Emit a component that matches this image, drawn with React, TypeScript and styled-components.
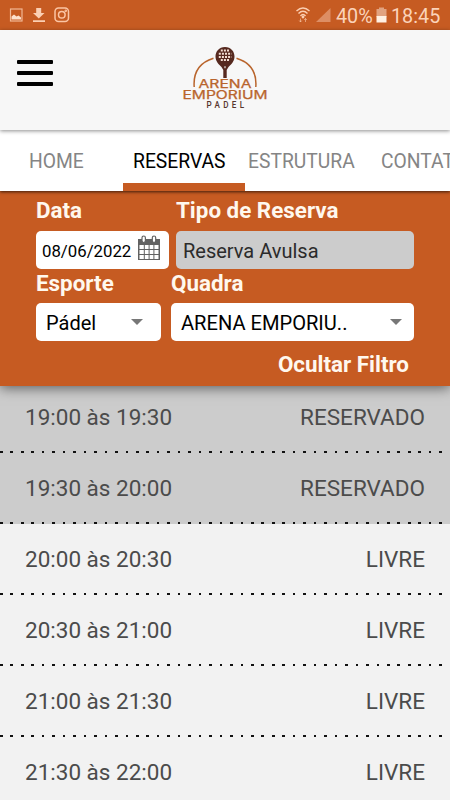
import React from "react";
import styled, { createGlobalStyle } from "styled-components";

const Global = createGlobalStyle`
  * { box-sizing: border-box; }
  body { margin: 0; background: #f2f2f2; font-family: Roboto, sans-serif; overflow: hidden; }
`;

const Screen = styled.div`
  width: 450px;
  height: 800px;
  overflow: hidden;
  display: flex;
  flex-direction: column;
  background: #f2f2f2;
`;

const StatusBar = styled.div`
  flex: none;
  height: 30px;
  padding: 0 10px 0 9px;
  display: flex;
  align-items: center;
  justify-content: space-between;
  background: #c65b22;
  color: #fbd3ba;
`;

const StatusGroup = styled.div`
  display: flex;
  align-items: center;
  height: 30px;
`;

const StatusText = styled.span<{ $w: number }>`
  width: ${(p) => p.$w}px;
  font-size: 19.8px;
  line-height: 33px;
  height: 30px;
  white-space: nowrap;
`;

const Header = styled.header`
  flex: none;
  height: 100px;
  display: flex;
  background: #f7f7f7;
  position: relative;
  box-shadow: 0 1px 4px rgba(0, 0, 0, 0.45);
  z-index: 3;
`;

const MenuButton = styled.button`
  width: 36px;
  height: 26px;
  margin: 30px 0 0 17px;
  padding: 0;
  border: 0;
  background: none;
  display: flex;
  flex-direction: column;
  justify-content: space-between;
`;

const MenuLine = styled.span`
  height: 3.6px;
  border-radius: 1px;
  background: #000;
`;

const Logo = styled.svg`
  display: block;
  margin: 6px 0 0 117px;
`;

const Tabs = styled.nav`
  flex: none;
  height: 61px;
  display: flex;
  background: #fff;
  position: relative;
  z-index: 2;
  box-shadow: 0 1px 3px rgba(0, 0, 0, 0.7);
`;

const Tab = styled.a<{ $active?: boolean; $w: number; $pad: number }>`
  flex: none;
  width: ${(p) => p.$w}px;
  padding-left: ${(p) => p.$pad}px;
  font-size: 19.3px;
  line-height: 64px;
  height: 61px;
  white-space: nowrap;
  color: ${(p) => (p.$active ? "#000" : "#858585")};
  box-shadow: ${(p) => (p.$active ? "inset 0 -8px #c65b22" : "none")};
`;

const FilterPanel = styled.section`
  flex: none;
  height: 195px;
  padding: 4px 36px 0;
  background: #c65b22;
  position: relative;
  z-index: 1;
  box-shadow: 0 2px 12px rgba(0, 0, 0, 0.55);
`;

const FilterRow = styled.div<{ $cols: string; $gap: number; $h: number }>`
  display: grid;
  grid-template-columns: ${(p) => p.$cols};
  column-gap: ${(p) => p.$gap}px;
  height: ${(p) => p.$h}px;
`;

const Label = styled.div<{ $h: number; $ls?: number }>`
  height: ${(p) => p.$h}px;
  line-height: 30px;
  font-size: 22.4px;
  letter-spacing: ${(p) => p.$ls ?? 0}px;
  font-weight: 700;
  color: #fff8ee;
`;

const Field = styled.div<{ $muted?: boolean; $pad: number; $right: number; $size: number }>`
  height: 38px;
  padding: 2px ${(p) => p.$right}px 0 ${(p) => p.$pad}px;
  display: flex;
  align-items: center;
  justify-content: space-between;
  border-radius: 5px;
  background: ${(p) => (p.$muted ? "#ccc" : "#fff")};
  color: ${(p) => (p.$muted ? "#2b2b2b" : "#000")};
  font-size: ${(p) => p.$size}px;
  white-space: nowrap;
`;

const Caret = styled.span`
  margin-bottom: 2px;
  border: 6px solid transparent;
  border-top-color: #777;
  border-bottom: 0;
`;

const HideFilter = styled.div`
  padding-right: 5px;
  text-align: right;
  font-size: 22.4px;
  line-height: 26px;
  font-weight: 700;
  color: #fff8ee;
`;

const List = styled.div`
  margin-top: -4px;
`;

const Slot = styled.div<{ $taken: boolean }>`
  height: 71px;
  padding: 0 25px 0 25px;
  display: flex;
  justify-content: space-between;
  font-size: 22.5px;
  line-height: 70px;
  color: #4b4b4b;
  background:
    repeating-linear-gradient(90deg, #111 0 2.6px, transparent 2.6px 10.46px) 0 100% / 100% 2px no-repeat,
    ${(p) => (p.$taken ? "#ccc" : "#f2f2f2")};
`;

const ImageIcon = () => (
  <svg width="14" height="14" viewBox="0 0 14 14" fill="none">
    <rect x="1.5" y="1" width="11.5" height="12" stroke="#f2b794" strokeWidth="1.2" />
    <path d="M2.5 11.5V8.5L5 6.5L7.5 8.5L9.5 7.5L12 9.5V11.5Z" fill="#fde0cc" />
  </svg>
);

const DownloadIcon = () => (
  <svg width="14" height="15" viewBox="0 0 14 15" fill="#fbcfb3">
    <path d="M4.2 0H9.2V5H12.5L6.8 10.5L1 5H4.2ZM1 12.3H13V14H1Z" />
  </svg>
);

const CameraIcon = () => (
  <svg width="16" height="16" viewBox="0 0 16 16" fill="none" stroke="#fbc5a4" strokeWidth="1.5">
    <rect x="1" y="1" width="13.5" height="13.5" rx="3.5" />
    <circle cx="7.8" cy="7.8" r="3.3" />
    <circle cx="11.8" cy="3.8" r=".5" />
  </svg>
);

const WifiSvg = styled.svg`
  margin-right: 1px;
`;

const WifiIcon = () => (
  <WifiSvg width="16" height="18" viewBox="0 0 16 18" fill="none" stroke="#fbcfb3" strokeWidth="1.4">
    <path d="M1.500 5Q8-1 14.500 5M3.500 7.5Q8 3 12.500 7.5M5.500 10Q8 7 10.500 10" />
    <circle cx="8" cy="11" r=".7" fill="#fbcfb3" />
    <path d="M5.5 12.500V16M4.200 14.500L5.5 16L6.800 14.500M10.5 16V12.5M9.200 14L10.5 12.5L11.800 14" strokeWidth="1" opacity=".6" />
  </WifiSvg>
);

const SignalIcon = () => (
  <svg width="16" height="16" viewBox="0 0 16 16">
    <path d="M0 15L14.5 1V15Z" fill="#dd8e64" />
  </svg>
);

const BatteryIcon = () => (
  <svg width="11" height="17" viewBox="0 0 11 17">
    <path d="M3 .5H8V2H10.5V10H.5V2H3Z" fill="#e1a27f" />
    <path d="M.5 9H10.5V15.5H.5Z" fill="#fff0e2" />
  </svg>
);

const CalendarSvg = styled.svg`
  margin: 0 2px 6px 0;
`;

const CalendarIcon = () => (
  <CalendarSvg width="24" height="26" viewBox="0 0 24 26">
    <path d="M1 4H23V25H1Z" fill="#626262" />
    <path
      d="M2.5 10H6.8V14H2.5ZM7.8 10H11.6V14H7.8ZM12.6 10H16.4V14H12.6ZM17.4 10H21.5V14H17.4ZM2.5 15H6.8V19H2.5ZM7.8 15H11.6V19H7.8ZM12.6 15H16.4V19H12.6ZM17.4 15H21.5V19H17.4ZM2.5 20H6.8V24H2.5ZM7.8 20H11.6V24H7.8ZM12.6 20H16.4V24H12.6ZM17.4 20H21.5V24H17.4Z"
      fill="#fff"
    />
    <rect x="5" y="1" width="3.4" height="6.5" rx="1.7" fill="#fff" stroke="#626262" strokeWidth="1.2" />
    <rect x="15.3" y="1" width="3.4" height="6.5" rx="1.7" fill="#fff" stroke="#626262" strokeWidth="1.2" />
  </CalendarSvg>
);

const ArenaLogo = () => (
  <Logo width="110" height="80" viewBox="0 0 110 80">
    <path d="M24.2 51C23 35 31 26 43.5 22.2M66.5 22.2C79 26 87 35 85.8 51" fill="none" stroke="#b9652d" strokeWidth="1.5" />
    <path d="M55 11C61 11 64.5 15.5 64.5 20.5C64.5 25.5 61 28.5 58.5 31L56.7 34V42H53.3V34L51.5 31C49 28.5 45.5 25.5 45.5 20.5C45.5 15.5 49 11 55 11Z" fill="#56291f" />
    <g stroke="#f3ded3" strokeWidth="2" strokeDasharray="2 1.1">
      <path d="M50.8 14.5H59.4M48.8 17.7H61.5M48.8 20.9H61.5M50.8 24.1H59.4" />
    </g>
    <path d="M54 30.5H56L55 32.8Z" fill="#f7f7f7" />
    <g fontFamily="Inter, sans-serif" fill="#b9652d" stroke="#b9652d" strokeWidth=".25">
      <text x="28.5" y="52.2" fontSize="11.6" textLength="53" lengthAdjust="spacingAndGlyphs">ARENA</text>
      <text x="12.5" y="62.6" fontSize="11.6" textLength="85" lengthAdjust="spacingAndGlyphs">EMPORIUM</text>
    </g>
    <text x="36.5" y="72" fontFamily="Roboto, sans-serif" fontSize="9.6" fontWeight="500" fill="#56352c" letterSpacing="4" textLength="41" lengthAdjust="spacingAndGlyphs">PADEL</text>
  </Logo>
);

const slots = [
  { time: "19:00 às 19:30", taken: true },
  { time: "19:30 às 20:00", taken: true },
  { time: "20:00 às 20:30", taken: false },
  { time: "20:30 às 21:00", taken: false },
  { time: "21:00 às 21:30", taken: false },
  { time: "21:30 às 22:00", taken: false },
];

const StatusLeft = styled(StatusGroup)`
  gap: 8.5px;
`;

const StatusRight = styled(StatusGroup)`
  gap: 4px;
`;

export default function App() {
  return (
    <Screen>
      <Global />
      <StatusBar>
        <StatusLeft>
          <ImageIcon />
          <DownloadIcon />
          <CameraIcon />
        </StatusLeft>
        <StatusRight>
          <WifiIcon />
          <SignalIcon />
          <StatusText $w={36}>40%</StatusText>
          <BatteryIcon />
          <StatusText $w={49}>18:45</StatusText>
        </StatusRight>
      </StatusBar>
      <Header>
        <MenuButton aria-label="Menu">
          <MenuLine />
          <MenuLine />
          <MenuLine />
        </MenuButton>
        <ArenaLogo />
      </Header>
      <Tabs>
        <Tab $w={123} $pad={29}>HOME</Tab>
        <Tab $w={122} $pad={10} $active>RESERVAS</Tab>
        <Tab $w={126} $pad={3}>ESTRUTURA</Tab>
        <Tab $w={123} $pad={10}>CONTATO</Tab>
      </Tabs>
      <FilterPanel>
        <FilterRow $cols="133px 238px" $gap={7} $h={73}>
          <div>
            <Label $h={36}>Data</Label>
            <Field $pad={6} $right={6} $size={16.8}>
              08/06/2022
              <CalendarIcon />
            </Field>
          </div>
          <div>
            <Label $h={36}>Tipo de Reserva</Label>
            <Field $muted $pad={7} $right={6} $size={20}>Reserva Avulsa</Field>
          </div>
        </FilterRow>
        <FilterRow $cols="125px 243px" $gap={10} $h={83}>
          <div>
            <Label $h={35}>Esporte</Label>
            <Field $pad={10} $right={18} $size={20}>
              Pádel
              <Caret />
            </Field>
          </div>
          <div>
            <Label $h={35}>Quadra</Label>
            <Field $pad={10} $right={12} $size={20.1}>
              ARENA EMPORIU..
              <Caret />
            </Field>
          </div>
        </FilterRow>
        <HideFilter>Ocultar Filtro</HideFilter>
      </FilterPanel>
      <List>
        {slots.map((s) => (
          <Slot key={s.time} $taken={s.taken}>
            <span>{s.time}</span>
            <span>{s.taken ? "RESERVADO" : "LIVRE"}</span>
          </Slot>
        ))}
      </List>
    </Screen>
  );
}
